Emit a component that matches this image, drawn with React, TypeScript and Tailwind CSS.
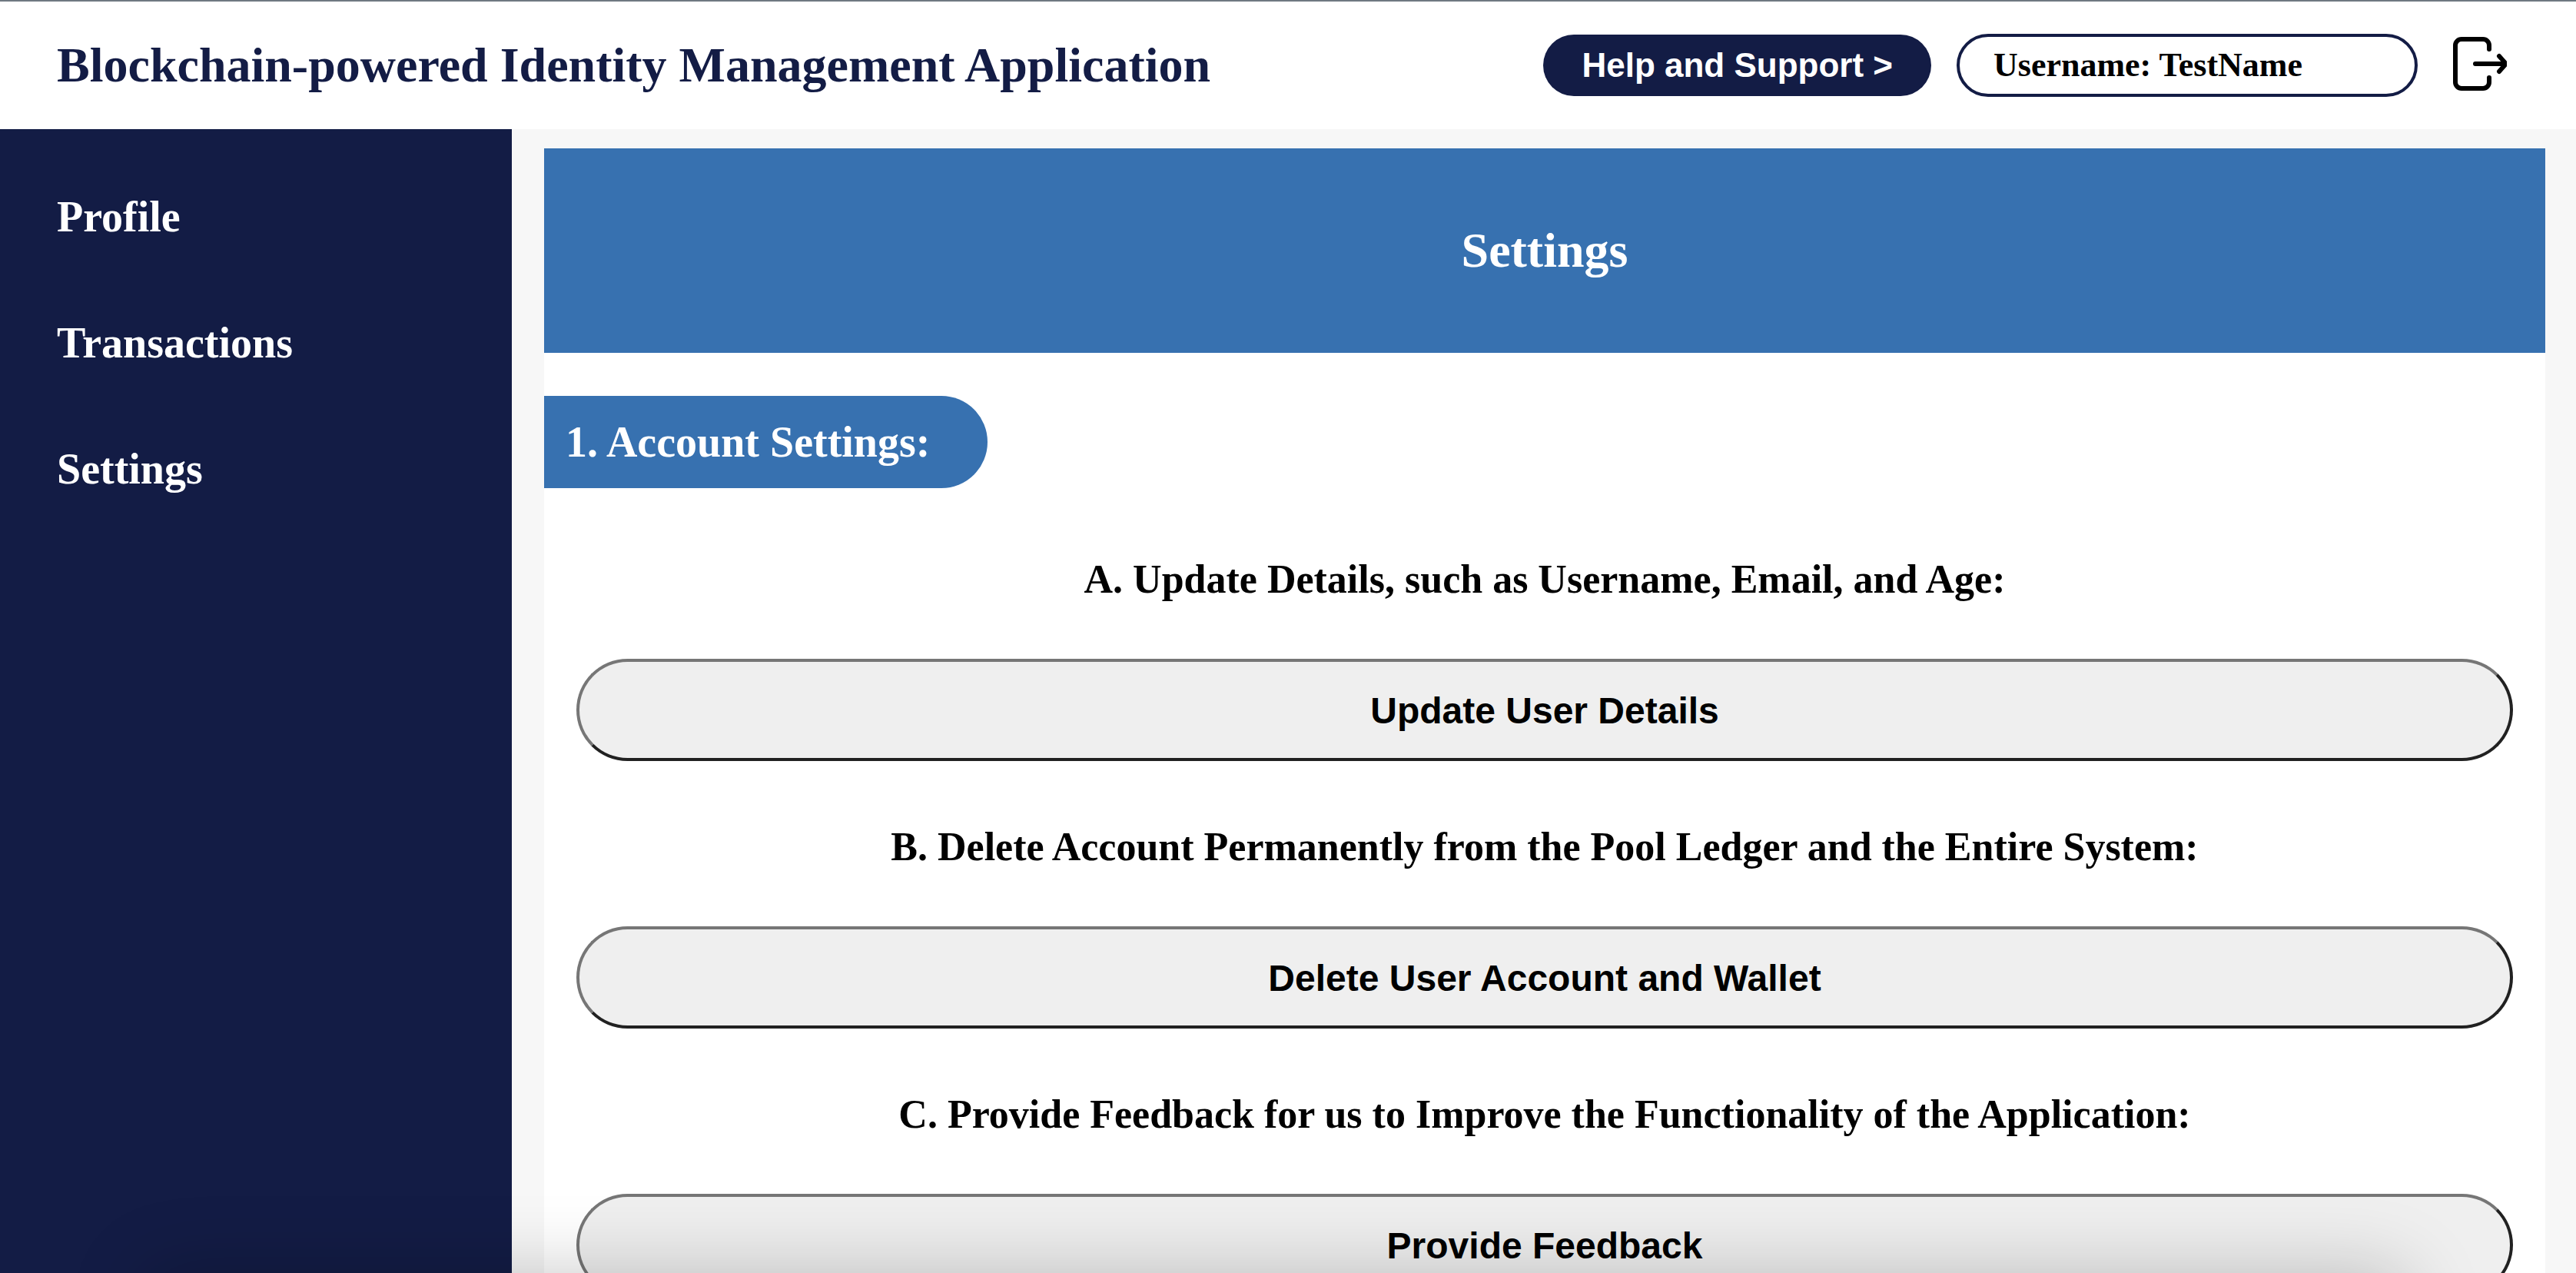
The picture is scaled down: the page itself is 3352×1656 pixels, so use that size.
import React from 'react';

const navItems = ['Profile', 'Transactions', 'Settings'];

const sections = [
  { title: 'A. Update Details, such as Username, Email, and Age:', action: 'Update User Details' },
  { title: 'B. Delete Account Permanently from the Pool Ledger and the Entire System:', action: 'Delete User Account and Wallet' },
  { title: 'C. Provide Feedback for us to Improve the Functionality of the Application:', action: 'Provide Feedback' },
];

export default function App() {
  return (
    <div className="relative flex h-screen flex-col overflow-hidden bg-[#f7f7f7] font-['Liberation_Serif',serif] font-bold">
      <header className="flex h-[168px] shrink-0 items-center border-t-2 border-[#6f7981] bg-white pr-[90px] pl-[74px] text-[#131c45]">
        <h1 className="text-[64px] leading-[74px]">Blockchain-powered Identity Management Application</h1>
        <div className="ml-auto flex items-center">
          <button className="h-20 rounded-full bg-[#131c45] px-[50px] font-['Liberation_Sans',sans-serif] text-[44px] text-white">
            Help and Support &gt;
          </button>
          <div className="ml-[33px] flex h-[82px] w-[600px] items-center rounded-full border-4 border-[#131c45] px-11 text-[44px] text-black">
            Username: TestName
          </div>
          <button aria-label="Log out" className="mb-1 ml-[46px]">
            <svg className="block" width="70" height="70" viewBox="0 0 70 70" fill="none" stroke="black" strokeWidth="6" strokeLinecap="round" strokeLinejoin="round">
              <path d="M47 16V11a8 8 0 0 0-8-8H11a8 8 0 0 0-8 8v48a8 8 0 0 0 8 8h28a8 8 0 0 0 8-8V53M29 35h38M60 25l9 10-9 10" />
            </svg>
          </button>
        </div>
      </header>
      <div className="flex min-h-0 flex-1">
        <nav className="flex w-[666px] shrink-0 flex-col gap-[100px] bg-[#131c45] px-[74px] pt-[82px] text-[56px] leading-[64px] text-white">
          {navItems.map((item) => (
            <a key={item} href="#" className="block">{item}</a>
          ))}
        </nav>
        <main className="ml-[42px] mr-10 mt-[25px] min-w-0 flex-1 overflow-hidden bg-white">
          <h2 className="flex h-[266px] items-center justify-center bg-[#3771b0] text-[64px] text-white">Settings</h2>
          <h3 className="mt-14 flex h-[120px] w-[577px] items-center rounded-r-full bg-[#3771b0] pl-7 text-[56px] text-white">
            1. Account Settings:
          </h3>
          <div className="mt-[89px] flex flex-col gap-[82px] px-[42px]">
            {sections.map((s) => (
              <section key={s.title}>
                <h4 className="text-center text-[52px] leading-[60px]">{s.title}</h4>
                <button className="mt-[73px] block h-[133px] w-full rounded-full border-4 border-t-[#767676] border-r-[#212121] border-b-[#212121] border-l-[#767676] bg-[#efefef] pt-0.5 font-['Liberation_Sans',sans-serif] text-[48px]">
                  {s.action}
                </button>
              </section>
            ))}
          </div>
        </main>
      </div>
      <div className="pointer-events-none absolute top-full right-[220px] left-[190px] h-40 rounded-3xl shadow-[0_0_100px_rgba(0,0,0,0.22)]" />
    </div>
  );
}
